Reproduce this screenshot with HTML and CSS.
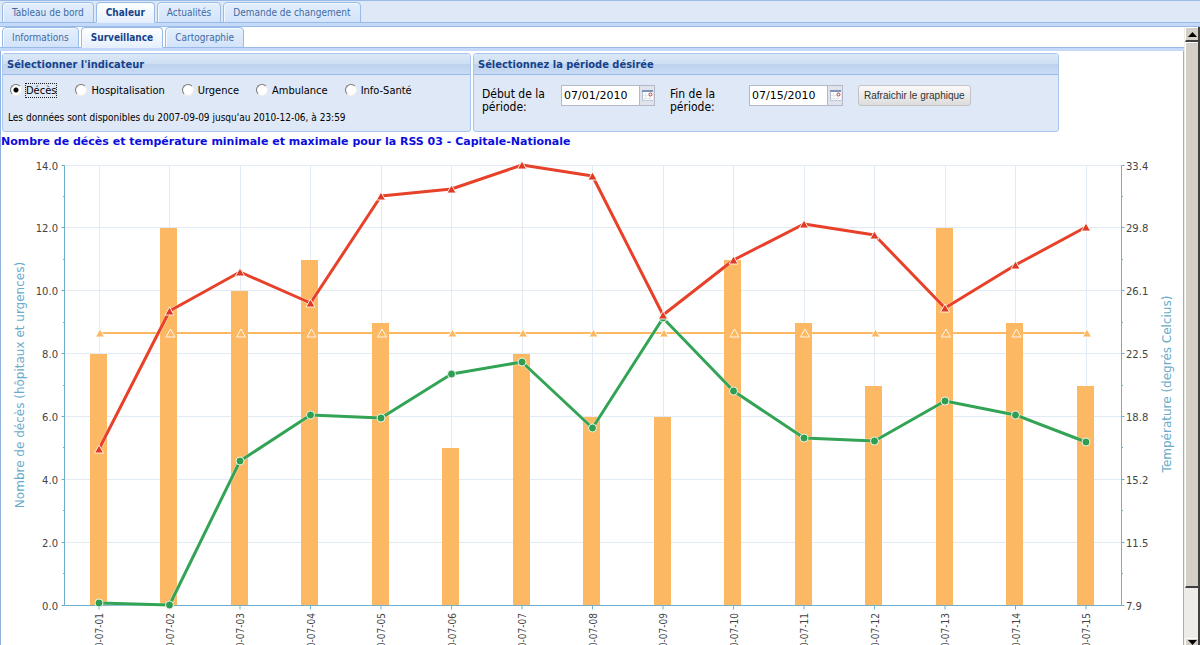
FILE: index.html
```html
<!DOCTYPE html>
<html lang="fr">
<head>
<meta charset="utf-8">
<title>Surveillance - Chaleur</title>
<link rel="stylesheet" href="styles.css">
</head>
<body>
<div class="app">
  <nav class="tabs tabs-main" aria-label="Sections">
    <button class="tab" type="button">Tableau de bord</button>
    <button class="tab tab-active" type="button">Chaleur</button>
    <button class="tab" type="button">Actualités</button>
    <button class="tab" type="button">Demande de changement</button>
  </nav>
  <div class="body">
    <div class="content">
      <nav class="tabs tabs-sub" aria-label="Chaleur">
        <button class="tab" type="button">Informations</button>
        <button class="tab tab-active" type="button">Surveillance</button>
        <button class="tab" type="button">Cartographie</button>
      </nav>
      <main class="page">
        <form class="panels">
          <section class="panel">
            <h2 class="panel-title">Sélectionner l'indicateur</h2>
            <div class="panel-body">
              <div class="radios">
                <label class="radio radio-focus"><input type="radio" name="ind" checked><span>Décès</span></label>
                <label class="radio"><input type="radio" name="ind"><span>Hospitalisation</span></label>
                <label class="radio"><input type="radio" name="ind"><span>Urgence</span></label>
                <label class="radio"><input type="radio" name="ind"><span>Ambulance</span></label>
                <label class="radio"><input type="radio" name="ind"><span>Info-Santé</span></label>
              </div>
              <p class="note">Les données sont disponibles du 2007-09-09 jusqu'au 2010-12-06, à 23:59</p>
            </div>
          </section>
          <section class="panel">
            <h2 class="panel-title">Sélectionnez la période désirée</h2>
            <div class="panel-body period">
              <label class="period-label" for="start">Début de la période:</label>
              <div class="date">
                <input class="date-input" id="start" type="text" value="07/01/2010">
                <button class="date-button" type="button" aria-label="Choisir la date de début">
                  <svg width="13" height="13" viewBox="0 0 13 13"><rect x="1" y="1" width="11" height="11" fill="#fff"/><path d="M1.500 3v8.500H12" fill="none" stroke="#b4bfd2"/><rect x="1" y="1" width="11" height="2" fill="#7c93b8"/><path d="M2 6.500h9M2 9.500h9M4.500 4v8M8.500 4v8" stroke="#e3e8f0"/><circle cx="9.500" cy="5.500" r="1.500" fill="#fff" stroke="#b03a3a"/></svg>
                </button>
              </div>
              <label class="period-label" for="end">Fin de la période:</label>
              <div class="date">
                <input class="date-input" id="end" type="text" value="07/15/2010">
                <button class="date-button" type="button" aria-label="Choisir la date de fin">
                  <svg width="13" height="13" viewBox="0 0 13 13"><rect x="1" y="1" width="11" height="11" fill="#fff"/><path d="M1.500 3v8.500H12" fill="none" stroke="#b4bfd2"/><rect x="1" y="1" width="11" height="2" fill="#7c93b8"/><path d="M2 6.500h9M2 9.500h9M4.500 4v8M8.500 4v8" stroke="#e3e8f0"/><circle cx="9.500" cy="5.500" r="1.500" fill="#fff" stroke="#b03a3a"/></svg>
                </button>
              </div>
              <button class="refresh" type="button">Rafraichir le graphique</button>
            </div>
          </section>
        </form>
        <h1 class="chart-title">Nombre de décès et température minimale et maximale pour la RSS 03 - Capitale-Nationale</h1>
        <svg class="chart" id="chart" viewBox="1 150 1182 540" role="img" aria-label="Décès et températures par jour"></svg>
      </main>
    </div>
    <div class="scroll" aria-hidden="true">
      <div class="scroll-arrow"><svg width="9" height="5" viewBox="0 0 9 5"><path d="M4.500 0L9 5H0z"/></svg></div>
      <div class="scroll-thumb"></div>
      <div class="scroll-track"></div>
      <div class="scroll-arrow"><svg width="9" height="5" viewBox="0 0 9 5"><path d="M4.500 5L9 0H0z"/></svg></div>
    </div>
  </div>
</div>
<script src="chart.js"></script>
</body>
</html>
```
FILE: styles.css
```css
* { box-sizing: border-box; }
body {
  margin: 0;
  background: #fff;
  color: #000;
  font: 11px "DejaVu Sans Condensed", "DejaVu Sans", sans-serif;
}
button, input { font: inherit; }
.app {
  display: flex;
  flex-direction: column;
  height: 100vh;
  overflow: hidden;
  border-top: 1px solid #99bbe8;
}
.tabs {
  display: flex;
  gap: 3px;
  padding: 1px 2px 0;
  border-bottom: 3px solid #c5dafa;
  box-shadow: inset 0 -1px 0 #99bbe8;
  flex: none;
}
.tabs-main { background: #dee8f6; box-shadow: inset 0 -1px 0 #99bbe8, 0 1px 0 #99bbe8; }
.tab {
  height: 21px;
  margin: 0;
  padding: 0 9px;
  border: 1px solid #99bbe8;
  border-radius: 4px 4px 0 0;
  background: linear-gradient(#e4effd, #d3e3fa);
  box-shadow: inset 1px 1px 0 #f4f9ff;
  color: #416aa3;
  font-size: 10px;
  white-space: nowrap;
}
.tab-active {
  border-bottom-color: #e6f0fd;
  background: linear-gradient(#fff, #e6f0fd);
  color: #15428b;
  font-weight: bold;
}
.body { display: flex; flex: 1; min-height: 0; }
.content {
  flex: 1;
  min-width: 0;
  overflow: hidden;
}
.tabs-main, .tabs-sub { gap: 2px; }
.tabs-sub { margin-top: 1px; padding-top: 0; }
.page { border: solid #8fb1df; border-width: 0 1px; }
.panels {
  display: grid;
  grid-template-columns: minmax(0, 469px) minmax(0, 586px);
  gap: 2px;
  padding: 2px 1px 0;
}
.panel {
  border: 1px solid #a9c6ec;
  border-radius: 3px;
  background: #dfe8f6;
}
.panel-title {
  height: 21px;
  margin: 0;
  padding: 0 4px;
  border-bottom: 1px solid #99bbe8;
  background: linear-gradient(#dbe8f7, #cfe0f4 48%, #bfd3ee 52%, #c9dbf3);
  color: #15428b;
  font-size: 11px;
  line-height: 21px;
}
.panel-body { height: 56px; padding: 8px 5px 0; }
.radios { display: flex; gap: 15px; }
.radio { display: flex; align-items: center; gap: 3px; height: 14px; white-space: nowrap; }
.radio-focus { margin-right: 2px; }
.radio input {
  appearance: none;
  width: 12px;
  height: 12px;
  margin: 0 1px 0 2px;
  border: 1px solid;
  border-color: #77756f #f1efe9 #f1efe9 #77756f;
  border-radius: 50%;
  background: #fff;
}
.radio input:checked { background: radial-gradient(circle, #000 0 2px, #fff 3px); }
.radio-focus span { outline: 1px dotted #222; }
.note { margin: 14px 0 0; font-size: 10px; line-height: 14px; }
.period { display: flex; align-items: flex-start; padding: 10px 8px 0; }
.period-label { width: 79px; padding: 3px 8px 0 0; font-size: 12px; line-height: 13px; }
.date { display: flex; width: 94px; height: 21px; margin-right: 15px; }
.date-input {
  width: 78px;
  height: 21px;
  padding: 0 2px;
  border: 1px solid #b5b8c8;
  border-right: 0;
  background: #fff;
  font: 11px "DejaVu Sans", sans-serif;
}
.date-button {
  width: 16px;
  height: 21px;
  padding: 3px 1px;
  border: 1px solid #b5b8c8;
  background: #e1e3ea;
  line-height: 0;
}
.refresh {
  height: 21px;
  padding: 0 5px;
  border: 1px solid #c3c3c3;
  border-radius: 3px;
  background: linear-gradient(#fafafa, #dcdcdc);
  color: #333;
  font: 10px "Liberation Sans", sans-serif;
  white-space: nowrap;
}
.chart-title {
  height: 18px;
  margin: 0;
  color: #0d0ddd;
  font: bold 11px/19px "DejaVu Sans", sans-serif;
  white-space: nowrap;
}
.chart { display: block; width: 100%; height: auto; }
.grid { stroke: #e2eaf3; }
.axis { stroke: #6fafcd; fill: none; }
.bar { fill: #fdb863; }
.num { fill: #444; font: 10px "DejaVu Sans", sans-serif; }
.name { fill: #69acc9; font: 12px "DejaVu Sans", sans-serif; }
.day { fill: #444; font: 10px "DejaVu Sans Condensed", "DejaVu Sans", sans-serif; }
.halo { fill: none; stroke: #fff; stroke-width: 4; stroke-opacity: .5; }
.line { fill: none; stroke-width: 3; stroke-linejoin: round; }
.line-max { stroke: #e8412a; }
.line-min { stroke: #33a456; }
.line-seuil { stroke: #fdb863; stroke-width: 2; }
.mark { stroke: #fff; stroke-opacity: .85; }
.mark-max { fill: #e03a22; }
.mark-min { fill: #2f9e50; }
.mark-seuil { fill: #fdb863; }
.scroll {
  display: flex;
  flex-direction: column;
  width: 16px;
  margin-top: 1px;
  padding-left: 1px;
  background: #eeece8;
  border-right: 2px solid #404040;
}
.scroll-arrow {
  display: flex;
  align-items: center;
  justify-content: center;
  height: 15px;
  flex: none;
  border: solid;
  border-width: 1px 0 2px 1px;
  border-color: #fff #404040 #404040 #fff;
  background: #d4d0c8;
}
.scroll-arrow:last-child { height: 7px; border-bottom: 0; }
.scroll-thumb {
  flex: 547;
  border: solid;
  border-width: 1px 0 2px 1px;
  border-color: #fff #404040 #404040 #fff;
  background: #d4d0c8;
}
.scroll-track { flex: 50; }
```
FILE: chart.js
```js
const deaths = [8, 12, 10, 11, 9, 5, 8, 6, 6, 11, 9, 7, 12, 9, 7];
const maxY = [449, 311, 272, 303, 196, 189, 165, 176, 315, 260, 224, 235, 308, 265, 227];
const minY = [603, 605, 461, 415, 418, 374, 362, 428, 318, 391, 438, 441, 401, 415, 442];
const right = ["33.4", "29.8", "26.1", "22.5", "18.8", "15.2", "11.5", "7.9"];
const top0 = 165.5, base = 605.5, left = 64.5, end = 1121.5, step = 70.5, first = 99, seuil = 333;
const x = i => first + i * step;
const y = v => base - v * (base - top0) / 14;
let out = "";
const line = (x1, y1, x2, y2, c) => { out += `<line x1="${x1}" y1="${y1}" x2="${x2}" y2="${y2}" class="${c}"/>`; };
const tri = (cx, cy, c) => { out += `<path d="M${cx} ${cy - 5}l4.500 8h-9z" class="mark ${c}"/>`; };

for (let v = 0; v <= 14; v += 2) line(left, Math.round(y(v)) - 0.5, end, Math.round(y(v)) - 0.5, "grid");
deaths.forEach((d, i) => line(Math.floor(x(i)) + 0.5, top0, Math.floor(x(i)) + 0.5, base, "grid"));
deaths.forEach((d, i) => { out += `<rect x="${Math.floor(x(i)) - 9}" y="${Math.round(y(d))}" width="17" height="${605 - Math.round(y(d))}" class="bar"/>`; });

out += `<path d="M${left} ${top0}V${base}H${end}V${top0}" class="axis"/>`;
for (let v = 0; v <= 14; v++) {
  const t = v % 2 ? 1.5 : 3, h = Math.round(y(v)) - 0.5;
  line(left - t, h, left, h, "axis");
  line(end, h, end + t, h, "axis");
  if (v % 2 === 0) {
    out += `<text x="58" y="${h + 4}" text-anchor="end" class="num">${v.toFixed(1)}</text>`;
    out += `<text x="1126" y="${h + 4}" class="num">${right[7 - v / 2]}</text>`;
  }
}
deaths.forEach((d, i) => {
  line(x(i), base, x(i), base + 4, "axis");
  const label = "2010-07-" + String(i + 1).padStart(2, "0");
  out += `<text transform="translate(${x(i) + 4} 613) rotate(-90)" text-anchor="end" class="day">${label}</text>`;
});
out += `<text transform="translate(24 385) rotate(-90)" text-anchor="middle" class="name">Nombre de décès (hôpitaux et urgences)</text>`;
out += `<text transform="translate(1171 384) rotate(-90)" text-anchor="middle" class="name">Température (degrés Celcius)</text>`;

line(x(0), seuil, x(14), seuil, "line line-seuil");
deaths.forEach((d, i) => tri(x(i) + 1, seuil + 1, "mark-seuil"));
const curve = (ys, c) => {
  const pts = ys.map((v, i) => `${x(i)},${v}`).join(" ");
  out += `<polyline points="${pts}" class="halo"/><polyline points="${pts}" class="line ${c}"/>`;
};
curve(minY, "line-min");
minY.forEach((v, i) => { out += `<circle cx="${x(i)}" cy="${v}" r="4" class="mark mark-min"/>`; });
curve(maxY, "line-max");
maxY.forEach((v, i) => tri(x(i), v + 1, "mark-max"));
document.getElementById("chart").innerHTML = out;
```
